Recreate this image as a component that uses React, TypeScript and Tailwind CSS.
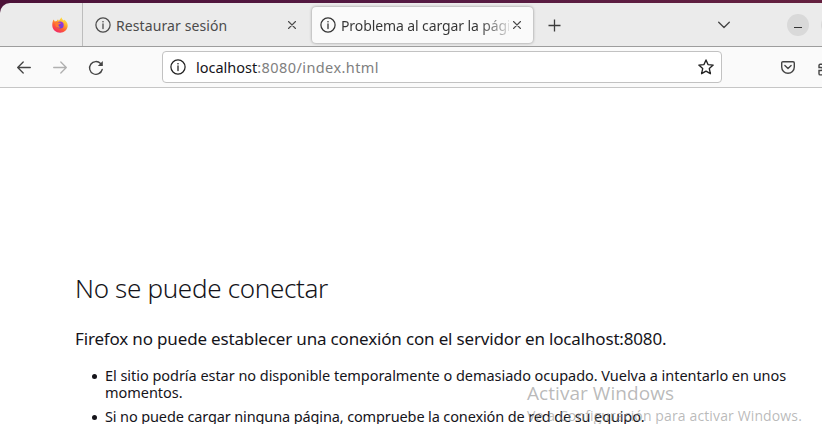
import React from "react";

function InfoIcon({ className }: { className: string }) {
  return (
    <svg className={className} width="16" height="16" viewBox="0 0 16 16" fill="none">
      <circle cx="8" cy="8" r="7.1" stroke="currentColor" strokeWidth="1.25" />
      <path d="M8 7v4.6" stroke="currentColor" strokeWidth="1.3" strokeLinecap="round" />
      <circle cx="8" cy="4.8" r=".8" fill="currentColor" />
    </svg>
  );
}

function CloseIcon() {
  return (
    <svg className="shrink-0" width="8" height="8" viewBox="0 0 8 8" fill="none" stroke="#4a4a4a" strokeWidth="1.1" strokeLinecap="round">
      <path d="M.5.5l7 7M7.5.5l-7 7" />
    </svg>
  );
}

function FirefoxIcon() {
  return (
    <svg className="ml-[52px] shrink-0" width="16" height="16" viewBox="0 0 16 16">
      <defs>
        <linearGradient id="flame" x1=".85" y1=".05" x2=".3" y2="1">
          <stop offset="0" stopColor="#fff04a" />
          <stop offset=".35" stopColor="#ffb02e" />
          <stop offset=".65" stopColor="#ff5f33" />
          <stop offset="1" stopColor="#f0256b" />
        </linearGradient>
        <linearGradient id="globe" x1="0" y1="1" x2="1" y2="0">
          <stop offset="0" stopColor="#5b3fd0" />
          <stop offset="1" stopColor="#a136e0" />
        </linearGradient>
      </defs>
      <path d="M1.6 2.6l1.2 1.8 2-.3L6 2.2l.7 1.6C8 2.700 8.400 1.500 9.600.3c.2 1.700 1 2.300 2 3.300l.9-.8c2 1.700 3.300 3.700 3.200 6-.2 4-3.500 7-7.600 7S.5 12.700.3 8.800c-.1-2.500.4-4.700 1.300-6.200z" fill="url(#flame)" />
      <circle cx="8.200" cy="8.100" r="3.500" fill="url(#globe)" />
      <path d="M3 5c1.500-.5 2.800-.3 3.700.6l2.100.3c-.2 1-1.400 1.300-2.200 1.600-.4 1.700.8 2.600 2.200 2.300-1.600 1.600-4.500.9-5.300-1.200z" fill="#ff7a32" />
    </svg>
  );
}

function TabBar() {
  return (
    <div className="flex h-[44px] shrink-0 items-stretch rounded-tl-[10px] border-b border-[#9d9d9d] bg-[#ebebeb] text-[#4b4b4b]">
      <div className="flex w-[83px] shrink-0 items-center border-r border-[#bdbdbd]">
        <FirefoxIcon />
      </div>
      <div className="flex w-[229px] shrink-0 items-center pl-3">
        <InfoIcon className="shrink-0" />
        <span className="mt-[2px] ml-[5px] w-[172px] whitespace-nowrap text-[14px] tracking-[0.1px]">Restaurar sesión</span>
        <CloseIcon />
      </div>
      <div className="mt-[4px] mb-[3px] flex w-[221px] shrink-0 items-center rounded-[4px] bg-[#fafafa] pl-[8px] text-[#353535] shadow-[0_0_3px_rgba(0,0,0,0.42)]">
        <InfoIcon className="shrink-0" />
        <span className="ml-[5px] mr-[4px] w-[168px] overflow-hidden whitespace-nowrap bg-linear-to-r from-[#353535] from-[82%] to-[#dadada] bg-clip-text text-[14px] tracking-[-0.1px] text-transparent">Problema al cargar la página</span>
        <CloseIcon />
      </div>
      <div className="flex flex-1 items-center overflow-hidden">
        <svg className="mt-px ml-[15px] shrink-0" width="13" height="13" viewBox="0 0 13 13" stroke="#3c3c3c" strokeWidth="1.3">
          <path d="M6.500.5v12M.5 6.500h12" />
        </svg>
        <svg className="ml-[157px] shrink-0" width="12" height="8" viewBox="0 0 12 8" fill="none" stroke="#444" strokeWidth="1.3" strokeLinecap="round" strokeLinejoin="round">
          <path d="M.7 1.200L6 6.500l5.300-5.300" />
        </svg>
        <div className="ml-[57px] flex h-[22px] w-[22px] shrink-0 items-center justify-center rounded-full bg-[#d9d9d9]">
          <div className="mt-[5px] h-px w-2 bg-[#333]" />
        </div>
        <div className="ml-[12px] h-[22px] w-[22px] shrink-0 rounded-full bg-[#d9d9d9]" />
      </div>
    </div>
  );
}

function Toolbar() {
  return (
    <div className="flex h-[41px] shrink-0 items-center overflow-hidden border-b border-[#c6c6c6] bg-[#fafafa]">
      <svg className="ml-[17px] shrink-0" width="14" height="13" viewBox="0 0 14 13" fill="none" stroke="#444" strokeWidth="1.3" strokeLinecap="round" strokeLinejoin="round">
        <path d="M13.300 6.500H.8M6.200 1L.7 6.500l5.500 5.500" />
      </svg>
      <svg className="ml-[22px] shrink-0" width="14" height="13" viewBox="0 0 14 13" fill="none" stroke="#b0b0b0" strokeWidth="1.3" strokeLinecap="round" strokeLinejoin="round">
        <path d="M.7 6.500h12.500M7.800 1l5.500 5.500L7.800 12" />
      </svg>
      <svg className="mt-px ml-[21px] shrink-0" width="16" height="16" viewBox="0 0 16 16" fill="none" stroke="#444" strokeWidth="1.35" strokeLinecap="round">
        <path d="M12.600 3.500A6.400 6.400 0 1 0 14.200 9.500" />
        <path d="M14.800 1v5H9.800z" fill="#444" stroke="none" />
      </svg>
      <div className="ml-[58px] flex h-8 w-[560px] shrink-0 items-center rounded-[4px] border border-[#c2c2c2] bg-white px-[7px]">
        <InfoIcon className="shrink-0 text-[#222]" />
        <span className="mt-px ml-[10px] flex-1 whitespace-nowrap text-[14.500px] tracking-[0.42px] text-[#808080]">
          <span className="tracking-[0px] text-[#15141a]">localhost</span>:8080/index.html
        </span>
        <svg className="shrink-0" width="16" height="16" viewBox="0 0 16 16" fill="none" stroke="#222" strokeWidth="1.35" strokeLinejoin="round">
          <path d="M8 .9l2 4.700 5.200.5-3.900 3.500 1.100 5.100L8 12.100l-4.400 2.600 1.100-5.100L.8 6.100 6 5.600z" />
        </svg>
      </div>
      <svg className="ml-[59px] shrink-0" width="14" height="13" viewBox="0 0 14 13" fill="none" stroke="#444" strokeWidth="1.4" strokeLinecap="round" strokeLinejoin="round">
        <path d="M2 .7h10c.8 0 1.300.5 1.300 1.300v4a6.300 6.300 0 0 1-12.600 0V2C.7 1.200 1.200.7 2 .7z" />
        <path d="M3.900 4.500L7 7.400l3.100-2.900" />
      </svg>
      <svg className="mt-[3px] ml-[23px] shrink-0" width="16" height="16" viewBox="0 0 16 16" fill="none" stroke="#444" strokeWidth="1.4">
        <path d="M5 3.300H2.200c-.8 0-1.200.5-1.200 1.200v2h2.200c2 0 2 3 0 3H1v3.200c0 .8.5 1.200 1.200 1.200h10.500V3.300H9c0-3-4-3-4 0z" />
      </svg>
    </div>
  );
}

export default function App() {
  return (
    <div className="relative flex h-[424px] w-[822px] flex-col overflow-hidden bg-white font-['Noto_Sans',sans-serif]">
      <div className="flex flex-col bg-linear-to-r from-[#4c1238] via-[#551a43] to-[#64203f] pt-[3px]">
        <TabBar />
      </div>
      <Toolbar />
      <main className="pl-[75px] text-[#15141a]">
        <h1 className="mt-[180px] whitespace-nowrap text-[26px] leading-[40px] font-light tracking-[-0.32px]">
          <span>No se puede conectar</span>
        </h1>
        <p className="mt-[19px] whitespace-nowrap text-[17px] leading-[24px] tracking-[-0.165px]">
          <span>Firefox no puede establecer una conexión con el servidor en localhost:8080.</span>
        </p>
        <ul className="mt-[16px] flex flex-col gap-[7px] whitespace-nowrap text-[14.500px] leading-[17px]">
          <li className="flex">
            <span className="mt-[7px] mr-[8px] ml-[17px] h-[5px] w-[5px] rounded-full bg-[#15141a]" />
            <div className="tracking-[-0.04px]">
              <span>El sitio podría estar no disponible temporalmente o demasiado ocupado. Vuelva a intentarlo en unos</span>
              <br />
              <span>momentos.</span>
            </div>
          </li>
          <li className="flex tracking-[-0.125px]">
            <span className="mt-[7px] mr-[8px] ml-[17px] h-[5px] w-[5px] rounded-full bg-[#15141a]" />
            <span>Si no puede cargar ninguna página, compruebe la conexión de red de su equipo.</span>
          </li>
        </ul>
      </main>
      <div className="absolute top-[380px] left-[527px] whitespace-nowrap font-['Open_Sans',sans-serif] text-[#8c8c8c]/60">
        <div className="text-[19px] leading-[26px] tracking-[0.05px]">Activar Windows</div>
        <div className="text-[14px] leading-[19px] tracking-[0.13px]">Ve a Configuración para activar Windows.</div>
      </div>
    </div>
  );
}
